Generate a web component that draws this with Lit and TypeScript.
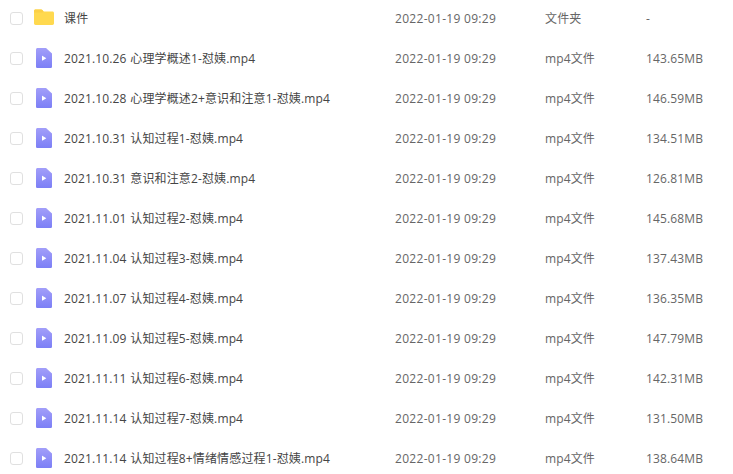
import { LitElement, html, css, svg } from "lit";
import { customElement } from "lit/decorators.js";

interface Row { name: string; size: string; type: string; folder?: boolean }

const rows: Row[] = [
  { name: "课件", size: "-", type: "文件夹", folder: true },
  ...[
    ["2021.10.26 心理学概述1-怼姨.mp4", "143.65MB"],
    ["2021.10.28 心理学概述2+意识和注意1-怼姨.mp4", "146.59MB"],
    ["2021.10.31 认知过程1-怼姨.mp4", "134.51MB"],
    ["2021.10.31 意识和注意2-怼姨.mp4", "126.81MB"],
    ["2021.11.01 认知过程2-怼姨.mp4", "145.68MB"],
    ["2021.11.04 认知过程3-怼姨.mp4", "137.43MB"],
    ["2021.11.07 认知过程4-怼姨.mp4", "136.35MB"],
    ["2021.11.09 认知过程5-怼姨.mp4", "147.79MB"],
    ["2021.11.11 认知过程6-怼姨.mp4", "142.31MB"],
    ["2021.11.14 认知过程7-怼姨.mp4", "131.50MB"],
    ["2021.11.14 认知过程8+情绪情感过程1-怼姨.mp4", "138.64MB"],
  ].map(([name, size]) => ({ name, size, type: "mp4文件" })),
];

const folderIcon = svg`<svg class="icon" width="22" height="18" viewBox="0 0 22 18">
  <path d="M1 2.6C1 1.7 1.7 1 2.6 1h5.6c.6 0 1 .2 1.4.7l1 1.5h8.8c1 0 1.6.7 1.6 1.6v10.5c0 1-.7 1.7-1.6 1.7H2.6C1.7 17 1 16.3 1 15.3z" fill="#ffd94f" transform="translate(0 -.5) scale(1 .97)"/>
  <path d="M1 2.6C1 1.7 1.7 1 2.6 1h5.6c.6 0 1 .2 1.4.7l1 1.5c-.3.5-.7.8-1.3.8H1z" fill="#fcd047" transform="translate(0 -.5)"/>
</svg>`;

const videoIcon = svg`<svg class="icon" width="22" height="20" viewBox="0 0 22 20">
  <defs><linearGradient id="v" x1="0" y1="0" x2="0" y2="1">
    <stop offset="0" stop-color="#a29ef9"/><stop offset="1" stop-color="#7c7ff6"/>
  </linearGradient></defs>
  <path d="M3 1.6C3 .7 3.7 0 4.6 0H13l6 5.6v12.8c0 .9-.7 1.6-1.6 1.6H4.6C3.7 20 3 19.3 3 18.4z" fill="url(#v)"/>
  <path d="M9 8.2c0-.3.3-.5.6-.3l3.4 2c.3.2.3.5 0 .7l-3.4 2c-.3.2-.6 0-.6-.3z" fill="#fff"/>
</svg>`;

@customElement("app-root")
export class AppRoot extends LitElement {
  static styles = css`
    :host {
      display: block;
      width: 733px;
      height: 474px;
      overflow: hidden;
      background: #fff;
      font-family: "Open Sans", "Noto Sans CJK SC", sans-serif;
      font-size: 12px;
      color: #666;
    }
    .list {
      margin-top: -2px;
    }
    .row {
      display: grid;
      grid-template-columns: 23px 31px 331px 150px 101px 1fr;
      align-items: center;
      height: 40px;
      padding-left: 10px;
      white-space: nowrap;
    }
    .box {
      width: 11px;
      height: 11px;
      border: 1px solid #e0e0e0;
      border-radius: 3px;
      background: #fff;
    }
    .icon {
      display: block;
    }
    .name {
      color: #454545;
      letter-spacing: 0.14px;
      word-spacing: 0.4px;
    }
    .date {
      letter-spacing: 0.3px;
    }
    .type,
    .size {
      letter-spacing: 0.14px;
    }
  `;

  render() {
    return html`<div class="list">
      ${rows.map(
        (r) => html`<div class="row">
          <span class="box"></span>
          ${r.folder ? folderIcon : videoIcon}
          <span class="name">${r.name}</span>
          <span class="date">2022-01-19 09:29</span>
          <span class="type">${r.type}</span>
          <span class="size">${r.size}</span>
        </div>`
      )}
    </div>`;
  }
}
